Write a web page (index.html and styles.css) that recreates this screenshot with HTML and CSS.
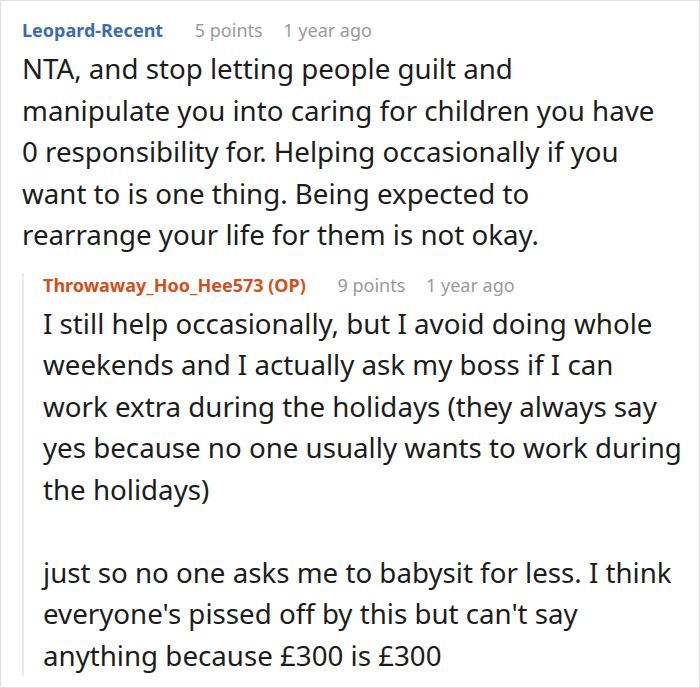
FILE: index.html
```html
<!DOCTYPE html>
<html>
<head>
<meta charset="utf-8">
<link rel="stylesheet" href="styles.css">
</head>
<body>
<div class="frame">
  <div class="comment">
    <div class="meta">
      <span class="user">Leopard-Recent</span>
      <span class="points">5 points</span>
      <span class="time">1 year ago</span>
    </div>
    <div class="text main-text">
      <p>NTA, and stop letting people guilt and manipulate you into caring for children you have 0 responsibility for. Helping occasionally if you want to is one thing. Being expected to rearrange your life for them is not okay.</p>
    </div>
    <div class="reply">
      <div class="meta">
        <span class="user op">Throwaway_Hoo_Hee573 (OP)</span>
        <span class="points">9 points</span>
        <span class="time">1 year ago</span>
      </div>
      <div class="text">
        <p>I still help occasionally, but I avoid doing whole weekends and I actually ask my boss if I can work extra during the holidays (they always say yes because no one usually wants to work during the holidays)</p>
        <p>just so no one asks me to babysit for less. I think everyone's pissed off by this but can't say anything because £300 is £300</p>
      </div>
    </div>
  </div>
</div>
</body>
</html>
```
FILE: styles.css
```css
html, body {
  margin: 0;
  padding: 0;
  background: #fff;
}
.frame {
  width: 700px;
  height: 688px;
  box-sizing: border-box;
  border: 1px solid #e2e2e2;
  overflow: hidden;
  font-family: "Noto Sans", "Open Sans", sans-serif;
}
.comment {
  padding: 17px 0 0 21px;
}
.meta {
  font-size: 18px;
  line-height: 24px;
  height: 24px;
  white-space: nowrap;
}
.user {
  font-weight: bold;
  color: #3d6bb3;
  margin-right: 27px;
}
.user.op {
  color: #d2501c;
}
.points {
  color: #9a9a9a;
  margin-right: 16px;
}
.time {
  color: #9a9a9a;
}
.text {
  margin-top: 6px;
  font-size: 27.7px;
  line-height: 41.5px;
  color: #1c1c1c;
}
.main-text {
  padding-right: 37px;
}
.text p {
  margin: 0 0 41.5px 0;
}
.text p:last-child {
  margin-bottom: 0;
}
.reply {
  margin-top: 34px;
  border-left: 2px solid #ebebeb;
  padding-left: 19px;
  padding-right: 15px;
}
.reply .meta {
  margin-top: -17px;
}
.reply .text {
  margin-bottom: -9px;
}
```
